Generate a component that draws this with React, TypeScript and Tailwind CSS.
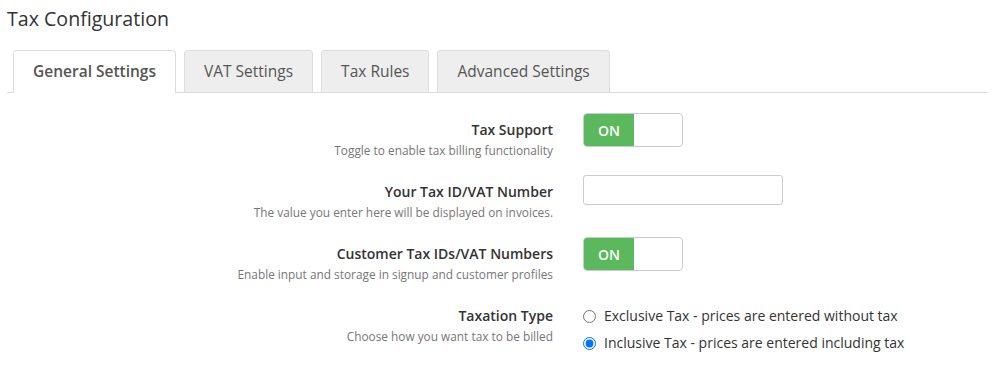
import React from "react";

const tabs = ["General Settings", "VAT Settings", "Tax Rules", "Advanced Settings"];

function Toggle() {
  return (
    <div className="flex h-[34px] w-[100px] overflow-hidden rounded-[4px] border border-[#ccc] bg-white">
      <div className="flex w-[50px] items-center justify-center bg-[#5cb85c] text-[14px] font-semibold text-white">ON</div>
    </div>
  );
}

function Row({ label, desc, children }: { label: string; desc: string; children: React.ReactNode }) {
  return (
    <div className="flex h-[62px] items-start">
      <div className="w-[553px] pt-[7px] text-right">
        <div className="text-[14px] font-semibold leading-[20px] text-[#333]">{label}</div>
        <div className="mt-[2px] text-[11.85px] leading-[17px] text-[#777]">{desc}</div>
      </div>
      <div className="ml-[30px]">{children}</div>
    </div>
  );
}

export default function App() {
  return (
    <div className="min-h-[368px] bg-white px-[7px] pt-[5px] text-[#333]" style={{ fontFamily: '"Open Sans", sans-serif' }}>
      <h1 className="text-[19.6px] leading-[28px] text-[#333]">Tax Configuration</h1>
      <div className="mt-[17px] flex gap-[8px] border-b border-[#ddd] pl-[6px]">
        {tabs.map((t, i) => (
          <div
            key={t}
            className={
              i === 0
                ? "-mb-px flex h-[43px] items-center rounded-t-[4px] border border-b-0 border-[#ddd] bg-white px-[19px] text-[15.5px] font-semibold text-[#555]"
                : "flex h-[42px] items-center rounded-t-[4px] border border-b-0 border-[#ddd] bg-[#eee] px-[19px] text-[15.5px] text-[#555]"
            }
          >
            {t}
          </div>
        ))}
      </div>
      <div className="mt-[20px] -ml-[7px]">
        <Row label="Tax Support" desc="Toggle to enable tax billing functionality">
          <Toggle />
        </Row>
        <Row label="Your Tax ID/VAT Number" desc="The value you enter here will be displayed on invoices.">
          <input type="text" className="h-[30px] w-[200px] rounded-[3px] border border-[#ccc] px-2 text-[13px] outline-none" />
        </Row>
        <Row label="Customer Tax IDs/VAT Numbers" desc="Enable input and storage in signup and customer profiles">
          <Toggle />
        </Row>
        <Row label="Taxation Type" desc="Choose how you want tax to be billed">
          <div className="flex flex-col gap-[7px] pt-[7px]">
            <label className="flex items-center gap-[8px] text-[14px] leading-[20px] text-[#333]">
              <input type="radio" name="taxtype" className="m-0 h-[13px] w-[13px]" />
              Exclusive Tax - prices are entered without tax
            </label>
            <label className="flex items-center gap-[8px] text-[14px] leading-[20px] text-[#333]">
              <input type="radio" name="taxtype" defaultChecked className="m-0 h-[13px] w-[13px]" />
              Inclusive Tax - prices are entered including tax
            </label>
          </div>
        </Row>
      </div>
    </div>
  );
}
